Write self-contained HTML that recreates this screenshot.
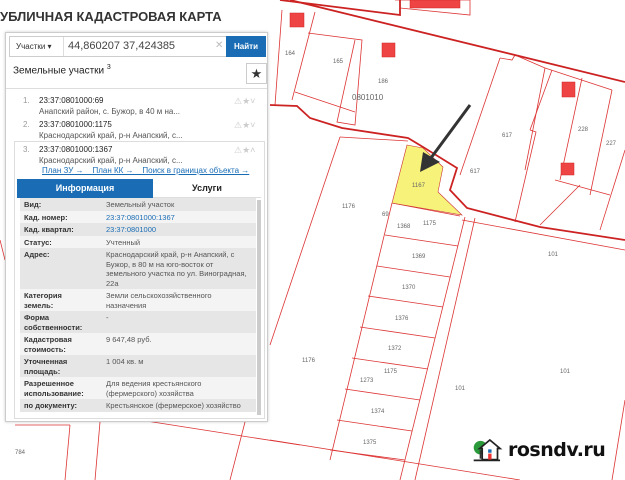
<!DOCTYPE html>
<html><head><meta charset="utf-8"><style>
*{margin:0;padding:0;box-sizing:border-box}
body{width:625px;height:480px;overflow:hidden;background:#fff;font-family:"Liberation Sans",sans-serif;position:relative}
svg.map{position:absolute;left:0;top:0}
.title{position:absolute;left:0;top:9px;font-size:13px;font-weight:bold;color:#333}
.panel{position:absolute;left:5px;top:32px;width:263px;height:390px;background:#fff;border:1px solid #ccc;box-shadow:0 0 3px rgba(0,0,0,.2)}
.sb{position:absolute;left:3px;top:3px;width:257px;height:21px;border:1px solid #ccc;background:#fff}
.sel{position:absolute;left:0;top:0;width:54px;height:19px;border-right:1px solid #ddd;font-size:8px;color:#333;padding:5px 0 0 6px}
.inp{position:absolute;left:58px;top:3px;font-size:11px;color:#444}
.x{position:absolute;left:205px;top:3px;font-size:10px;color:#bbb}
.btn{position:absolute;right:-1px;top:-1px;width:40px;height:21px;background:#1a6db5;color:#fff;font-size:8px;font-weight:bold;text-align:center;padding-top:6px}
.hdr{position:absolute;left:7px;top:31px;font-size:10px;color:#222}
.star{position:absolute;left:240px;top:30px;width:21px;height:21px;border:1px solid #ccc;font-size:13px;text-align:center;line-height:19px;color:#333}
.hl{position:absolute;left:0;top:55px;width:261px;border-top:1px solid #ddd}
.it{position:absolute;left:33px;font-size:8px;color:#555;line-height:11px}
.it b{font-weight:normal;color:#222}
.it .n{position:absolute;left:-16px;color:#999}
.ic{position:absolute;left:228px;font-size:9px;color:#ccc}
.box{position:absolute;left:8px;top:108px;width:251px;height:278px;border:1px solid #ddd}
.links{position:absolute;left:36px;top:133px;font-size:8px;color:#1a6db5;text-decoration:underline}
.tabs{position:absolute;left:11px;top:146px;width:244px;height:19px}
.t1{position:absolute;left:0;top:0;width:136px;height:19px;background:#1a6db5;color:#fff;font-size:9px;font-weight:bold;text-align:center;padding-top:4px}
.t2{position:absolute;left:136px;top:0;width:108px;height:19px;font-size:9px;font-weight:bold;text-align:center;padding-top:4px;color:#222;border-bottom:1px solid #ddd}
table{position:absolute;left:14px;top:165px;width:236px;border-collapse:collapse;font-size:7.5px;color:#333}
td{vertical-align:top;padding:2px 4px 1px;line-height:9.5px}
td:first-child{width:82px;font-weight:bold;color:#333}
td:last-child{color:#555}
td.a{color:#1a6db5}
tr:nth-child(odd){background:#e6e6e6}
tr:nth-child(even){background:#f4f4f4}
.sc{position:absolute;left:251px;top:167px;width:4px;height:215px;background:#ccc}
.logo{position:absolute;left:508px;top:439px;font-size:19px;font-weight:bold;color:#111;font-family:"DejaVu Sans","Liberation Sans",sans-serif;letter-spacing:-0.5px}
</style></head><body>
<svg class="map" width="625" height="480" viewBox="0 0 625 480">
<g fill="none" stroke="#d33" stroke-width="0.8">
<polyline points="395,0 470,0 470,15 400,8"/>
<line x1="282" y1="10" x2="275" y2="105"/>
<line x1="315" y1="12" x2="292" y2="100"/>
<polyline points="295,92 355,112"/>
<polyline points="308,33 362,40 355,125 337,122 355,40"/>
<line x1="500" y1="58" x2="460" y2="175"/>
<polyline points="500,58 512,60 515,55 545,68"/>
<line x1="545" y1="68" x2="525" y2="170"/>
<line x1="552" y1="70" x2="530" y2="130"/>
<line x1="582" y1="78" x2="560" y2="180"/>
<line x1="612" y1="90" x2="590" y2="195"/>
<line x1="545" y1="68" x2="612" y2="90"/>
<polyline points="530,130 536,132 515,222"/>
<line x1="555" y1="180" x2="610" y2="195"/>
<line x1="580" y1="185" x2="540" y2="225"/>
<line x1="625" y1="150" x2="600" y2="230"/>
<polyline points="340,137 408,141"/>
<line x1="340" y1="137" x2="270" y2="345"/>
<line x1="392" y1="203" x2="460" y2="216"/>
<line x1="392" y1="203" x2="330" y2="460"/>
<line x1="475" y1="218" x2="415" y2="480"/>
<line x1="465" y1="217" x2="400" y2="480"/>
<line x1="462" y1="220" x2="625" y2="250"/>
<line x1="385" y1="235" x2="458" y2="246"/>
<line x1="377" y1="266" x2="450" y2="277"/>
<line x1="368" y1="296" x2="443" y2="307"/>
<line x1="360" y1="327" x2="435" y2="338"/>
<line x1="352" y1="358" x2="428" y2="369"/>
<line x1="345" y1="389" x2="420" y2="400"/>
<line x1="337" y1="420" x2="412" y2="431"/>
<line x1="330" y1="450" x2="405" y2="460"/>
<line x1="270" y1="440" x2="520" y2="480"/>
<line x1="140" y1="420" x2="300" y2="445"/>
<line x1="70" y1="425" x2="65" y2="480"/>
<line x1="100" y1="422" x2="95" y2="480"/>
<line x1="625" y1="400" x2="612" y2="480"/>
<line x1="245" y1="422" x2="230" y2="480"/>
<line x1="15" y1="425" x2="70" y2="425"/>
<line x1="0" y1="240" x2="5" y2="260"/>
</g>
<g fill="none" stroke="#c22" stroke-width="1.8">
<line x1="290" y1="0" x2="625" y2="82"/>
<polyline points="270,105 297,106 310,118 342,128 408,138 423,147 457,168 450,190 467,208 540,227 625,240"/>
<polyline points="280,0 400,15 400,0"/>
</g>
<polygon points="407,145 423,148 443,167 438,192 462,215 392,203" fill="#f6f27a" stroke="#c33" stroke-width="0.6"/>
<g fill="#e44" stroke="#c22" stroke-width="0.5">
<rect x="290" y="13" width="14" height="14"/>
<rect x="382" y="43" width="13" height="14"/>
<rect x="562" y="82" width="13" height="15"/>
<rect x="561" y="163" width="13" height="12"/>
<rect x="410" y="0" width="50" height="8"/>
</g>
<line x1="470" y1="105" x2="428" y2="162" stroke="#333" stroke-width="3"/>
<polygon points="420,172 423,152 440,162" fill="#333"/>
<g font-family="Liberation Sans" font-size="6" fill="#666">
<text x="285" y="55">164</text><text x="333" y="63">165</text><text x="378" y="83">186</text>
<text x="352" y="100" font-size="8">0801010</text>
<text x="502" y="137">617</text><text x="470" y="173">617</text>
<text x="578" y="131">228</text><text x="606" y="145">227</text>
<text x="412" y="187">1167</text><text x="342" y="208">1176</text><text x="382" y="216">69</text>
<text x="397" y="228">1368</text><text x="423" y="225">1175</text><text x="412" y="258">1369</text>
<text x="402" y="289">1370</text><text x="395" y="320">1376</text><text x="388" y="350">1372</text>
<text x="384" y="373">1175</text><text x="360" y="382">1273</text><text x="371" y="413">1374</text>
<text x="363" y="444">1375</text><text x="548" y="256">101</text><text x="560" y="373">101</text>
<text x="455" y="390">101</text><text x="302" y="362">1176</text><text x="15" y="454">784</text>
</g>
<g transform="translate(472,440) scale(0.85)">
<circle cx="10" cy="9" r="8" fill="#2a9a3a"/>
<rect x="9" y="12" width="2" height="10" fill="#333"/>
<polygon points="9,10 21,0 33,10 30,10 30,23 12,23 12,10" fill="#fff" stroke="#222" stroke-width="2"/>
<rect x="19" y="11" width="4" height="4" fill="#1a6db5"/>
<rect x="19" y="16" width="4" height="7" fill="#e33"/>
<line x1="2" y1="24" x2="33" y2="24" stroke="#222" stroke-width="2"/>
</g>
</svg>
<div class="title">УБЛИЧНАЯ КАДАСТРОВАЯ КАРТА</div>
<div class="panel">
<div class="sb"><div class="sel">Участки ▾</div><div class="inp">44,860207 37,424385</div><div class="x">✕</div><div class="btn">Найти</div></div>
<div class="hdr">Земельные участки <sup style="font-size:7px">3</sup></div>
<div class="star">★</div>
<div class="hl"></div>
<div class="it" style="top:62px"><span class="n">1.</span><b>23:37:0801000:69</b><br>Анапский район, с. Бужор, в 40 м на...</div><div class="ic" style="top:63px">⚠★˅</div>
<div class="it" style="top:86px"><span class="n">2.</span><b>23:37:0801000:1175</b><br>Краснодарский край, р-н Анапский, с...</div><div class="ic" style="top:87px">⚠★˅</div>
<div class="box"></div>
<div class="it" style="top:111px"><span class="n">3.</span><b>23:37:0801000:1367</b><br>Краснодарский край, р-н Анапский, с...</div><div class="ic" style="top:112px">⚠★˄</div>
<div class="links">План ЗУ →&nbsp;&nbsp;&nbsp;&nbsp;План КК →&nbsp;&nbsp;&nbsp;&nbsp;Поиск в границах объекта →</div>
<div class="tabs"><div class="t1">Информация</div><div class="t2">Услуги</div></div>
<table>
<tr><td>Вид:</td><td>Земельный участок</td></tr>
<tr><td>Кад. номер:</td><td class="a">23:37:0801000:1367</td></tr>
<tr><td>Кад. квартал:</td><td class="a">23:37:0801000</td></tr>
<tr><td>Статус:</td><td>Учтенный</td></tr>
<tr><td>Адрес:</td><td>Краснодарский край, р-н Анапский, с Бужор, в 80 м на юго-восток от земельного участка по ул. Виноградная, 22а</td></tr>
<tr><td>Категория<br>земель:</td><td>Земли сельскохозяйственного назначения</td></tr>
<tr><td>Форма<br>собственности:</td><td>-</td></tr>
<tr><td>Кадастровая<br>стоимость:</td><td>9 647,48 руб.</td></tr>
<tr><td>Уточненная<br>площадь:</td><td>1 004 кв. м</td></tr>
<tr><td>Разрешенное<br>использование:</td><td>Для ведения крестьянского (фермерского) хозяйства</td></tr>
<tr><td>по документу:</td><td>Крестьянское (фермерское) хозяйство</td></tr>
</table>
<div class="sc"></div>
</div>
<div class="logo">rosndv.ru</div>
</body></html>
